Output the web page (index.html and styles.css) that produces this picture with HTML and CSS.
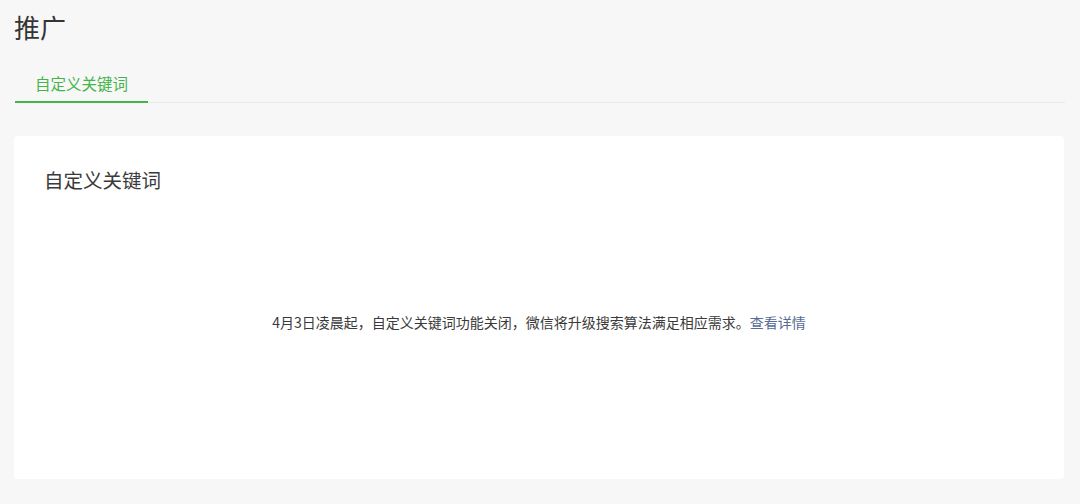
FILE: index.html
```html
<!DOCTYPE html>
<html lang="zh-CN">
<head>
    <meta charset="UTF-8">
    <meta name="viewport" content="width=device-width, initial-scale=1.0">
    <title>推广</title>
    <link rel="stylesheet" href="styles.css">
</head>
<body>
    <div class="page">
        <h1 class="page-title">推广</h1>
        <div class="tabs">
            <a class="tab tab-active" href="#">自定义关键词</a>
        </div>
        <div class="card">
            <h2 class="card-title">自定义关键词</h2>
            <p class="notice">4月3日凌晨起，自定义关键词功能关闭，微信将升级搜索算法满足相应需求。<a class="link" href="#">查看详情</a></p>
        </div>
    </div>
</body>
</html>
```

FILE: styles.css
```css
body {
    margin: 0;
    padding: 0;
    background-color: #f7f7f7;
    color: #353535;
    font-family: "Noto Sans CJK SC", "Noto Sans", sans-serif;
}
.page {
    padding: 0 15px 0 14px;
}
.page-title {
    margin: 9px 0 0;
    font-size: 26px;
    line-height: 36px;
    font-weight: normal;
    color: #353535;
}
.tabs {
    display: flex;
    margin-left: 1px;
    border-bottom: 1px solid #e9e9e9;
}
.tab {
    display: block;
    width: 133px;
    padding: 26px 0 6px;
    margin-bottom: -1px;
    text-align: center;
    font-size: 15.5px;
    line-height: 24px;
    color: #44b549;
    text-decoration: none;
    border-bottom: 2px solid transparent;
}
.tab-active {
    border-bottom-color: #44b549;
}
.card {
    margin-top: 33px;
    width: 1050px;
    height: 343px;
    box-sizing: border-box;
    padding: 30px 30px 0;
    background-color: #ffffff;
    border-radius: 4px;
}
.card-title {
    margin: 0;
    font-size: 19.5px;
    line-height: 28px;
    font-weight: normal;
    color: #3a3a3a;
}
.notice {
    margin: 117px 0 0;
    text-align: center;
    font-size: 14px;
    line-height: 22px;
    color: #3a3a3a;
}
.link {
    color: #576b95;
    text-decoration: none;
}
```
